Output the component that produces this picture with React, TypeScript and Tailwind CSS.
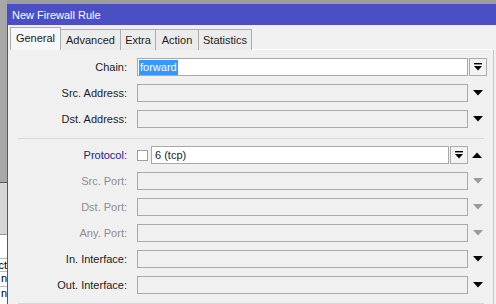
import type { ReactNode } from "react";

type Row = { label: string; tone: "normal" | "muted" | "link"; kind: "combo" | "select" | "proto"; value?: string; arrowMuted?: boolean };

const topRows: Row[] = [
  { label: "Chain:", tone: "normal", kind: "combo", value: "forward" },
  { label: "Src. Address:", tone: "normal", kind: "select" },
  { label: "Dst. Address:", tone: "normal", kind: "select" },
];

const bottomRows: Row[] = [
  { label: "Protocol:", tone: "link", kind: "proto", value: "6 (tcp)" },
  { label: "Src. Port:", tone: "muted", kind: "select", arrowMuted: true },
  { label: "Dst. Port:", tone: "muted", kind: "select", arrowMuted: true },
  { label: "Any. Port:", tone: "muted", kind: "select", arrowMuted: true },
  { label: "In. Interface:", tone: "normal", kind: "select" },
  { label: "Out. Interface:", tone: "normal", kind: "select" },
];

const tabs = [
  { name: "Advanced", w: "w-[60px]" },
  { name: "Extra", w: "w-[35px]" },
  { name: "Action", w: "w-[43px]" },
  { name: "Statistics", w: "w-[53px]" },
];

function Arrow({ up, muted }: { up?: boolean; muted?: boolean }) {
  return (
    <svg width="10" height="6" viewBox="0 0 10 6">
      <path d={up ? "M0 6 L5 0.5 L10 6 Z" : "M0 0 L10 0 L5 5.5 Z"} fill={muted ? "#9a9a9a" : "#000"} />
    </svg>
  );
}

function DropButton() {
  return (
    <div className="w-[18px] h-[18px] border border-[#acacac] bg-[#f3f3f3] flex items-center justify-center">
      <svg width="8" height="8" viewBox="0 0 8 8">
        <rect x="0" y="0" width="8" height="1.4" fill="#000" />
        <path d="M0 3 L8 3 L4 7.5 Z" fill="#000" />
      </svg>
    </div>
  );
}

function Field({ row }: { row: Row }) {
  const labelColor = row.tone === "muted" ? "text-[#8d8d8d]" : row.tone === "link" ? "text-[#20208e]" : "text-[#1c1c1c]";
  let control: ReactNode;
  if (row.kind === "combo") {
    control = (
      <>
        <div className="w-[331px] h-[18px] border border-[#a9a9a9] bg-white flex items-center pl-[1px]">
          <span className="bg-[#3399ff] text-white px-[1px] leading-[15px]">{row.value}</span>
        </div>
        <div className="ml-[1px]"><DropButton /></div>
      </>
    );
  } else if (row.kind === "proto") {
    control = (
      <>
        <div className="w-[11px] h-[11px] border border-[#9e9e9e] bg-white mr-[3px]" />
        <div className="w-[298px] h-[18px] border border-[#a9a9a9] bg-white flex items-center pl-[3px]">{row.value}</div>
        <div className="ml-[1px]"><DropButton /></div>
        <div className="w-[18px] flex justify-center"><Arrow up /></div>
      </>
    );
  } else {
    control = (
      <>
        <div className="w-[331px] h-[18px] border border-[#a9a9a9] bg-[#f0f0f0]" />
        <div className="w-[19px] flex justify-center"><Arrow muted={row.arrowMuted} /></div>
      </>
    );
  }
  return (
    <div className="flex items-center h-[18px]">
      <div className={`w-[119px] text-right ${labelColor}`}>{row.label}</div>
      <div className="ml-[10px] flex items-center">{control}</div>
    </div>
  );
}

export default function App() {
  return (
    <div className="w-[496px] h-[304px] overflow-hidden flex bg-[#f0f0f0] text-[11px] text-[#1c1c1c]" style={{ fontFamily: '"Liberation Sans", Arial, sans-serif' }}>
      <div className="w-[7px] flex flex-col shrink-0">
        <div className="h-[183px] bg-[#a7a7a7] border-b border-[#555]" />
        <div className="h-[52px] bg-[#d6d6d6] border-b border-[#9a9a9a]" />
        <div className="flex-1 bg-white text-[11px] leading-[13px] text-black overflow-hidden">
          <div className="h-[24px] border-b border-[#bbb]" />
          <div className="h-[13px] border-b border-[#bbb] flex justify-end"><span>ct</span></div>
          <div className="h-[15px] border-b border-[#bbb] flex justify-end"><span>n</span></div>
          <div className="flex justify-end"><span>n</span></div>
        </div>
      </div>
      <div className="flex-1 flex flex-col border-l border-[#5a5a5a]">
        <div className="h-[4px] bg-[#9d9d9d] -ml-[1px]" />
        <div className="h-[21px] bg-[#4b4fc6] text-white text-[11px] flex items-center pl-[4px] pt-[1px]">New Firewall Rule</div>
        <div className="h-[25px] flex items-end pl-[2px] pr-[3px]">
          <div className="h-[23px] w-[51px] border border-b-0 border-[#adadad] bg-[#f7f7f7] flex items-center justify-center pb-[2px]">General</div>
          {tabs.map((t) => (
            <div key={t.name} className={`h-[21px] ${t.w} border border-l-0 border-b-0 border-[#adadad] bg-[#ececec] flex items-center justify-center pt-[1px]`}>{t.name}</div>
          ))}
          <div className="flex-1 border-b border-white h-full" />
        </div>
        <div className="flex-1 mr-[2px] border-r border-[#c8c8c8] pt-[8px]">
          <div className="flex flex-col gap-[8px]">
            {topRows.map((r) => <Field key={r.label} row={r} />)}
          </div>
          <div className="ml-[10px] mr-[9px] mt-[10px] mb-[7px] border-t border-[#d8d8d8]" />
          <div className="flex flex-col gap-[8px]">
            {bottomRows.map((r) => <Field key={r.label} row={r} />)}
          </div>
          <div className="ml-[10px] mr-[9px] mt-[9px] border-t border-[#d8d8d8]" />
        </div>
      </div>
    </div>
  );
}
